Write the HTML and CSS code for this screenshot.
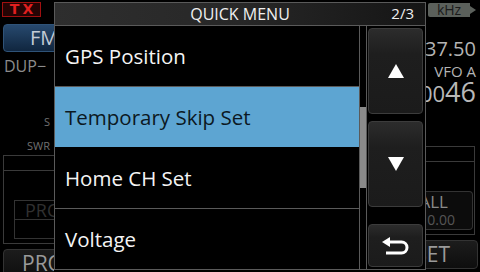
FILE: index.html
```html
<!DOCTYPE html>
<html>
<head>
<meta charset="utf-8">
<link rel="stylesheet" href="styles.css">
</head>
<body>
<div class="screen">
  <div class="side side-left">
    <div class="tx">TX</div>
    <div class="fm">FM</div>
    <div class="dup">DUP−</div>
    <div class="meter-label s">S</div>
    <div class="meter-label swr">SWR</div>
    <div class="frame-left">
      <div class="frame-row"></div>
      <div class="frame-body">
        <div class="sub-box-left">
          <div class="sub-top">PRO</div>
          <div class="sub-bottom"></div>
        </div>
      </div>
    </div>
    <div class="soft-btn soft-left">PRO</div>
  </div>

  <div class="dialog">
    <div class="dlg-header">
      <span class="dlg-title">QUICK MENU</span>
      <span class="dlg-page">2/3</span>
    </div>
    <div class="dlg-body">
      <div class="menu-list">
        <div class="menu-item">GPS Position</div>
        <div class="menu-item selected">Temporary Skip Set</div>
        <div class="menu-item">Home CH Set</div>
        <div class="menu-item last">Voltage</div>
      </div>
      <div class="scrollbar"><div class="thumb"></div></div>
      <div class="btn-col">
        <div class="nav-btn up">
          <svg width="16" height="14" viewBox="0 0 16 14"><polygon points="8,0 16,14 0,14" fill="#fff"/></svg>
        </div>
        <div class="nav-btn down">
          <svg width="16" height="14" viewBox="0 0 16 14"><polygon points="0,0 16,0 8,14" fill="#fff"/></svg>
        </div>
        <div class="nav-btn back">
          <svg width="27" height="18" viewBox="0 0 27 18"><polygon points="0,5 8,0 8,10" fill="#fff"/><path d="M7,5 H19.5 A5.5,5.5 0 0 1 19.5,16 H4" stroke="#fff" stroke-width="3" fill="none"/></svg>
        </div>
      </div>
    </div>
  </div>

  <div class="side side-right">
    <div class="khz"><span class="khz-label">kHz</span><span class="khz-tip"></span></div>
    <div class="freq">437.50</div>
    <div class="vfo">VFO A</div>
    <div class="big"><span class="big-s">00</span>46</div>
    <div class="frame-right">
      <div class="frame-row"></div>
      <div class="frame-body frame-body-right">
        <div class="sub-box-right">
          <div class="all">ALL</div>
          <div class="all-val">0.00</div>
        </div>
      </div>
    </div>
    <div class="soft-btn soft-right">SET</div>
  </div>
</div>
</body>
</html>
```

FILE: styles.css
```css
* { box-sizing: border-box; }
html, body {
  margin: 0;
  padding: 0;
  background: #000;
}
body {
  width: 480px;
  height: 272px;
  overflow: hidden;
  font-family: "Open Sans", "Noto Sans", sans-serif;
}
.screen {
  display: flex;
  width: 480px;
  height: 272px;
}
.side {
  width: 54px;
  height: 272px;
  overflow: hidden;
  display: flex;
  flex-direction: column;
  flex-shrink: 0;
}
.side-left { align-items: flex-start; }
.side-right { align-items: flex-end; }

/* left strip */
.tx {
  margin: 2px 0 0 2px;
  width: 39px;
  height: 15px;
  border: 1px solid #a01010;
  background: #250404;
  color: #e02020;
  font-family: "DejaVu Sans", sans-serif;
  font-weight: bold;
  font-size: 14px;
  line-height: 13px;
  letter-spacing: 3px;
  text-align: center;
  padding-left: 3px;
}
.fm {
  margin: 7px 0 0 3px;
  width: 70px;
  height: 28px;
  flex-shrink: 0;
  border: 1px solid #2f5378;
  border-radius: 4px;
  background: linear-gradient(#27496e, #10263f);
  color: #c4ccd6;
  font-size: 20px;
  line-height: 26px;
  padding-left: 26px;
}
.dup {
  margin: 4px 0 0 4px;
  color: #8c8c8c;
  font-size: 16px;
  line-height: 20px;
}
.meter-label {
  align-self: stretch;
  text-align: right;
  padding-right: 4px;
  color: #707070;
  font-size: 11px;
  line-height: 12px;
}
.s { margin-top: 40px; }
.swr { margin-top: 12px; }
.frame-left, .frame-right {
  flex-shrink: 0;
  height: 89px;
  width: 80px;
  margin-top: 3px;
  border: 1px solid #3a3a3a;
}
.frame-left { margin-left: 3px; border-right: none; }
.frame-right { margin-right: 5px; border-left: none; }
.frame-row {
  height: 15px;
  border-bottom: 1px solid #3a3a3a;
}
.frame-body {
  display: flex;
  padding-top: 29px;
}
.frame-body-right { justify-content: flex-end; }
.sub-box-left {
  margin-left: 10px;
  width: 60px;
  height: 39px;
  border: 1px solid #333;
  border-right: none;
  display: flex;
  flex-direction: column;
}
.sub-top {
  height: 19px;
  border-bottom: 1px solid #333;
  color: #303030;
  font-size: 18px;
  line-height: 19px;
  padding-left: 10px;
}
.sub-bottom { flex: 1; }
.soft-btn {
  flex-shrink: 0;
  margin-top: 5px;
  height: 29px;
  width: 80px;
  border: 1px solid #333;
  border-radius: 4px;
  background: linear-gradient(#1c1c1c, #0e0e0e);
  color: #9a9a9a;
  font-size: 21px;
  line-height: 27px;
}
.soft-left { margin-left: 3px; padding-left: 18px; }
.soft-right { margin-right: 2px; text-align: right; padding-right: 27px; }

/* right strip */
.khz {
  margin: 3px 4px 0 0;
  display: flex;
  align-items: center;
}
.khz-label {
  width: 42px;
  height: 14px;
  background: #5b605b;
  color: #1a1a1a;
  font-size: 14px;
  line-height: 14px;
  text-align: center;
  border-radius: 2px 0 0 2px;
}
.khz-tip {
  width: 0;
  height: 0;
  border-top: 4px solid transparent;
  border-bottom: 4px solid transparent;
  border-left: 6px solid #5b605b;
}
.freq {
  margin: 21px 4px 0 0;
  color: #b4b4b4;
  font-size: 20px;
  line-height: 21px;
  white-space: nowrap;
}
.vfo {
  margin: 4px 4px 0 0;
  color: #b4b4b4;
  font-size: 15px;
  line-height: 16px;
}
.big {
  margin: 1px 4px 0 0;
  color: #b8b8b8;
  font-size: 27px;
  line-height: 24px;
  white-space: nowrap;
}
.big-s { font-size: 22px; }
.frame-right { margin-top: 41px; }
.sub-box-right {
  margin-right: 1px;
  width: 70px;
  height: 39px;
  border: 1px solid #333;
  border-left: none;
  border-radius: 0 4px 4px 0;
  background: #0c0c0c;
  text-align: right;
  padding-top: 1px;
}
.all {
  color: #8a8a8a;
  font-size: 17px;
  line-height: 17px;
  padding-right: 24px;
}
.all-val {
  margin-top: 3px;
  color: #555;
  font-size: 14px;
  line-height: 14px;
  padding-right: 17px;
}

/* dialog */
.dialog {
  flex-shrink: 0;
  width: 372px;
  height: 268px;
  margin-top: 2px;
  border: 1px solid #5a5a5a;
  display: flex;
  flex-direction: column;
  background: #000;
}
.dlg-header {
  height: 23px;
  flex-shrink: 0;
  border-bottom: 1px solid #5a5a5a;
  background: linear-gradient(90deg, #2e2e2e, #272727 50%, #151515);
  display: flex;
  align-items: center;
  justify-content: center;
  position: relative;
  color: #f0f0f0;
}
.dlg-title {
  font-size: 16px;
}
.dlg-page {
  position: absolute;
  right: 11px;
  top: 0;
  font-size: 15px;
}
.dlg-body {
  flex: 1;
  display: flex;
}
.menu-list {
  width: 304px;
  display: flex;
  flex-direction: column;
}
.menu-item {
  height: 61px;
  border-bottom: 1px solid #5a5a5a;
  display: flex;
  align-items: center;
  padding-left: 10px;
  color: #f4f4f4;
  font-size: 20.5px;
}
.menu-item.last { border-bottom: none; height: 60px; }
.menu-item.selected {
  background: #5da5d2;
  color: #0c1822;
  border-bottom-color: #000;
}
.scrollbar {
  width: 8px;
  border-left: 1px solid #5a5a5a;
  border-right: 1px solid #5a5a5a;
  padding-top: 81px;
}
.thumb {
  height: 81px;
  background: #8a8a8a;
}
.btn-col {
  flex: 1;
  display: flex;
  flex-direction: column;
  padding: 2px 2px 1px 1px;
}
.nav-btn {
  border: 1px solid #3c3c3c;
  border-radius: 4px;
  background: linear-gradient(#2c2c2c, #1e1e1e 30%, #1b1b1b);
  display: flex;
  align-items: center;
  justify-content: center;
}
.up { height: 86px; }
.down { height: 86px; margin-top: 7px; }
.back { height: 43px; margin-top: 17px; padding-top: 1px; }
```
